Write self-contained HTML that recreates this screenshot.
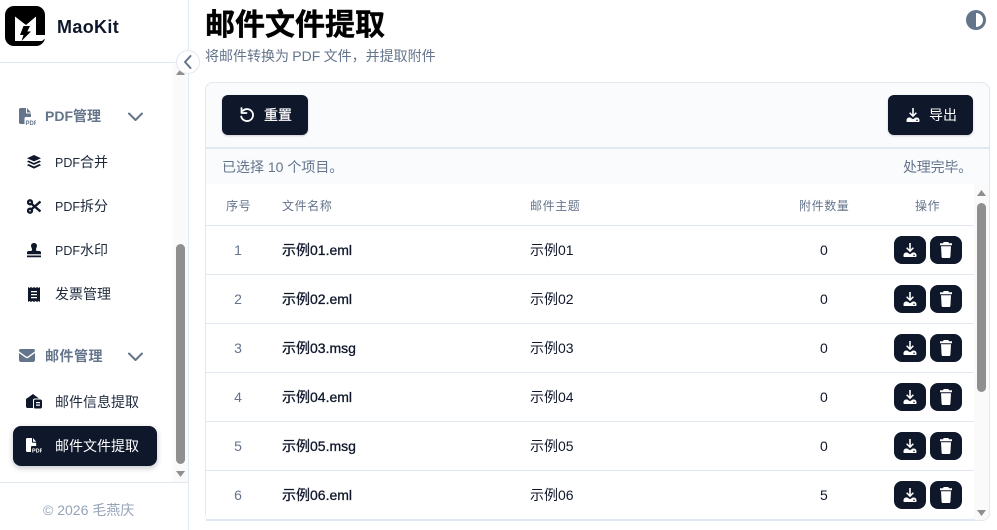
<!DOCTYPE html>
<html lang="zh"><head><meta charset="utf-8"><title>MaoKit</title>
<style>
*{box-sizing:border-box;margin:0;padding:0}
html,body{width:997px;height:530px;overflow:hidden;background:#fff}
body{position:relative;font-family:"Liberation Sans","Noto Sans CJK SC",sans-serif;color:#0f172a}
.a{position:absolute;white-space:nowrap}
svg{position:absolute;display:block}
.nav{font-size:14px;color:#1e293b;line-height:20px;left:55px}
.nav i{font-style:normal;font-size:12.500px}
.grp{font-size:14px;font-weight:700;color:#64748b;line-height:20px;left:45px}
.th{font-size:12px;letter-spacing:.6px;color:#64748b;line-height:16px;top:198px}
.c{font-size:14px;line-height:20px;color:#0f172a}
.f{font-size:14px;line-height:20px;color:#0f172a;left:282px;-webkit-text-stroke:.3px #0f172a}
.n{font-size:14px;line-height:20px;color:#64748b;width:40px;left:218px;text-align:center}
.hl{position:absolute;left:206px;width:768px;height:1px;background:#e2e8f0}
.b{position:absolute;width:32px;height:28px;border-radius:8px;background:#0f172a}
</style></head><body>
<svg width="0" height="0" style="position:absolute"><defs>
<g id="dl"><path fill="#fff" d="M7.200 1h1.600v6.200l2-2 1.100 1.100L8 10.200 4.100 6.300l1.100-1.100 2 2z"/><path fill="#fff" fill-rule="evenodd" d="M1.500 13.300c0-1.300.9-2.600 2.400-2.800h1.400L8 12.300l2.700-1.800h1.400c1.500.2 2.400 1.500 2.400 2.800v.9c0 .4-.3.800-.8.800H2.300c-.5 0-.8-.4-.8-.8zM12 12.500a.8.800 0 1 0 0 1.600.8.800 0 1 0 0-1.600z"/></g>
<g id="tr"><path fill="#fff" d="M5.700 0h4.600l.7 1.300H14V3.200H2V1.300H5zM3 4.200h10l-.6 10.500c0 .7-.6 1.300-1.200 1.300H4.800c-.6 0-1.200-.6-1.200-1.300z"/></g>
</defs></svg>

<!-- sidebar -->
<div class="a" style="left:188px;top:0;width:1px;height:530px;background:#e2e8f0"></div>
<div class="a" style="left:0;top:62px;width:188px;height:1px;background:#e2e8f0"></div>
<div class="a" style="left:0;top:482px;width:188px;height:1px;background:#e2e8f0"></div>
<div class="a" style="left:173px;top:63px;width:15px;height:419px;background:#fafafa"></div>
<div class="a" style="left:176px;top:244px;width:9px;height:220px;border-radius:5px;background:#8f8f8f"></div>
<svg style="left:176px;top:69px" width="9" height="6"><path d="M4.500 0L9 6H0z" fill="#8f8f8f"/></svg>
<svg style="left:176px;top:471px" width="9" height="6"><path d="M0 0H9L4.500 6z" fill="#8f8f8f"/></svg>

<svg style="left:5px;top:6px" width="40" height="40" viewBox="0 0 40 40">
<rect width="40" height="40" rx="9" fill="#000"/>
<path fill="#fff" d="M10 10.500L21 19 31 10.500V29H40V32.500L37 35H10z"/>
<path fill="#000" d="M18.500 20H25L22.300 25.500H26L16.500 35 18.500 29H15z"/>
</svg>
<div class="a" style="left:57px;top:15px;font-size:18px;font-weight:700;line-height:24px;color:#0f172a;letter-spacing:.35px">MaoKit</div>

<svg style="left:176px;top:50px" width="24" height="24"><circle cx="12" cy="12" r="11.500" fill="#fff" stroke="#e2e8f0"/><path d="M14.500 6L9 12l5.500 6" fill="none" stroke="#64748b" stroke-width="2" stroke-linecap="round" stroke-linejoin="round"/></svg>

<svg style="left:19px;top:108px" width="17" height="18" viewBox="0 0 17 18"><path fill="#64748b" d="M1.500 0H7v4.500c0 .6.400 1 1 1h4V9H7c-1 0-1.500.6-1.500 1.500V16H1.500C.7 16 0 15.300 0 14.500V1.500C0 .7.700 0 1.500 0zM8 0l4 4.500H8z"/><text x="6.500" y="17" font-size="6" font-weight="700" fill="#64748b" font-family="Liberation Sans">PDF</text></svg>
<div class="a grp" style="top:106px">PDF管理</div>
<svg style="left:128px;top:112px" width="15" height="10"><path d="M1 1.500L7.500 8 14 1.500" fill="none" stroke="#64748b" stroke-width="2" stroke-linecap="round" stroke-linejoin="round"/></svg>

<svg style="left:27px;top:155px" width="14" height="14" viewBox="0 0 14 14"><path fill="#0f172a" d="M7 0l7 3.200-7 3.200L0 3.200zM1.500 5.500L7 8l5.500-2.500L14 6.700 7 9.900 0 6.700zM1.500 9L7 11.500 12.500 9l1.500 1.200L7 13.600 0 10.200z"/></svg>
<div class="a nav" style="top:152px"><i>PDF</i>合并</div>
<svg style="left:27px;top:199px" width="14" height="15" viewBox="0 0 14 15"><g fill="none" stroke="#0f172a" stroke-width="2.300"><circle cx="3" cy="3.300" r="2"/><circle cx="3" cy="11.700" r="2"/><path d="M4.800 5L13.500 12.500M4.800 10L13.500 2.500"/></g></svg>
<div class="a nav" style="top:196px"><i>PDF</i>拆分</div>
<svg style="left:27px;top:243px" width="14" height="15" viewBox="0 0 14 15"><path fill="#0f172a" d="M7 0c1.700 0 3 1.200 3 2.800 0 1.500-1 2.200-1 3.700 0 .7.300 1.500 1 1.500h2.500c.8 0 1.500.7 1.500 1.500V11.300H0V9.500C0 8.700.700 8 1.500 8H4c.7 0 1-.8 1-1.500 0-1.500-1-2.200-1-3.700C4 1.200 5.300 0 7 0zM0 12.500h14V14.200H0z"/></svg>
<div class="a nav" style="top:240px"><i>PDF</i>水印</div>
<svg style="left:28px;top:287px" width="12" height="15" viewBox="0 0 12 15"><path fill="#0f172a" d="M0 0l1.500 1L3 0l1.500 1L6 0l1.500 1L9 0l1.500 1L12 0v15l-1.500-1L9 15l-1.500-1L6 15l-1.500-1L3 15l-1.500-1L0 15zM3 4v1.300h6V4zM3 7v1.300h6V7zM3 10v1.300h6V10z" fill-rule="evenodd"/></svg>
<div class="a nav" style="top:284px">发票管理</div>

<svg style="left:19px;top:349px" width="16" height="13" viewBox="0 0 16 13"><path fill="#64748b" d="M1.500 0h13C15.300 0 16 .7 16 1.500c0 .5-.2.900-.6 1.200L8.600 7.600c-.4.300-.8.300-1.200 0L.6 2.700C.2 2.400 0 2 0 1.500 0 .7.700 0 1.500 0zM0 4l6.800 4.900c.7.500 1.700.5 2.400 0L16 4v7c0 1.100-.9 2-2 2H2c-1.100 0-2-.9-2-2z"/></svg>
<div class="a grp" style="top:346px;letter-spacing:.5px">邮件管理</div>
<svg style="left:128px;top:352px" width="15" height="10"><path d="M1 1.500L7.500 8 14 1.500" fill="none" stroke="#64748b" stroke-width="2" stroke-linecap="round" stroke-linejoin="round"/></svg>

<svg style="left:26px;top:394px" width="16" height="15" viewBox="0 0 16 15"><path fill="#0f172a" d="M7 0l6 4.500H8.500C7.700 4.500 7 5.200 7 6v8H1.500C.7 14 0 13.300 0 12.500V5z"/><path fill="#0f172a" fill-rule="evenodd" d="M9 5.500h5.500c.8 0 1.500.7 1.500 1.500v6c0 .8-.7 1.500-1.500 1.500H9c-.8 0-1-.7-1-1.500V7c0-.8.200-1.500 1-1.500zM10 8v1.200h4V8zM10 10.500v1.200h4v-1.200z"/></svg>
<div class="a nav" style="top:392px">邮件信息提取</div>

<div class="a" style="left:13px;top:426px;width:144px;height:40px;border-radius:8px;background:#0f172a;box-shadow:0 2px 6px rgba(15,23,42,.25)"></div>
<svg style="left:26px;top:438px" width="16" height="16" viewBox="0 0 16 16"><path fill="#fff" d="M1.200 0H6v3.800c0 .5.300.9.900.9h3.300V8H6C5.200 8 5 8.500 5 9.200V14H1.200C.5 14 0 13.500 0 12.800V1.200C0 .5.500 0 1.200 0zM7 0l3.200 3.700H7z"/><text x="6" y="14.500" font-size="5.500" font-weight="700" fill="#fff" font-family="Liberation Sans">PDF</text></svg>
<div class="a nav" style="top:436px;color:#fff">邮件文件提取</div>

<div class="a" style="left:43px;top:500px;font-size:14px;line-height:20px;color:#94a3b8">© 2026 毛燕庆</div>

<!-- header -->
<div class="a" style="left:205px;top:8px;font-size:30px;font-weight:700;line-height:36px;color:#000;-webkit-text-stroke:.4px #000">邮件文件提取</div>
<div class="a" style="left:205px;top:46px;font-size:14px;line-height:20px;color:#64748b;word-spacing:-.6px">将邮件转换为 PDF 文件，并提取附件</div>
<svg style="left:966px;top:10px" width="20" height="20"><circle cx="10" cy="10" r="10" fill="#64748b"/><path d="M10 3a7 7 0 0 1 0 14z" fill="#fff"/></svg>

<!-- card -->
<div class="a" style="left:205px;top:82px;width:785px;height:439px;border:1px solid #e2e8f0;border-radius:8px;background:#fafbfd"></div>
<div class="a" style="left:206px;top:147px;width:783px;height:2px;background:#e2e8f0"></div>
<div class="a" style="left:206px;top:184px;width:768px;height:335px;background:#fff"></div>
<div class="a" style="left:974px;top:184px;width:15px;height:336px;border-radius:0 0 8px 0;background:#fafafa"></div>

<div class="a" style="left:222px;top:95px;width:86px;height:40px;border-radius:6px;background:#0f172a;box-shadow:0 1px 2px rgba(15,23,42,.2)"></div>
<svg style="left:239px;top:107px" width="16" height="16" viewBox="0 0 16 16"><path d="M3.800 3.800A6 6 0 1 1 2.200 9.500" fill="none" stroke="#fff" stroke-width="1.800" stroke-linecap="round"/><path d="M1.500 1.500V6.500H6.500" fill="none" stroke="#fff" stroke-width="1.800" stroke-linecap="round" stroke-linejoin="round" transform="translate(1 -.5)"/></svg>
<div class="a" style="left:264px;top:105px;font-size:14px;line-height:20px;color:#fff;-webkit-text-stroke:.2px #fff">重置</div>

<div class="a" style="left:888px;top:95px;width:85px;height:40px;border-radius:6px;background:#0f172a;box-shadow:0 1px 2px rgba(15,23,42,.2)"></div>
<svg style="left:905px;top:107px" width="16" height="16"><use href="#dl"/></svg>
<div class="a" style="left:929px;top:105px;font-size:14px;line-height:20px;color:#fff">导出</div>

<div class="a" style="left:222px;top:157px;font-size:14px;line-height:20px;color:#64748b">已选择 10 个项目。</div>
<div class="a" style="left:903px;top:157px;font-size:14px;line-height:20px;color:#64748b;letter-spacing:-.2px">处理完毕。</div>

<!-- table -->
<div class="a th" style="left:226px">序号</div>
<div class="a th" style="left:282px">文件名称</div>
<div class="a th" style="left:530px">邮件主题</div>
<div class="a th" style="left:799px">附件数量</div>
<div class="a th" style="left:915px">操作</div>
<div class="hl" style="top:225px"></div>
<div class="hl" style="top:274px"></div>
<div class="hl" style="top:323px"></div>
<div class="hl" style="top:372px"></div>
<div class="hl" style="top:421px"></div>
<div class="hl" style="top:470px"></div>
<div class="a" style="left:206px;top:519px;width:769px;height:2px;background:#e2e8f0"></div>

<div class="a n" style="top:240px">1</div>
<div class="a f" style="top:240px">示例01.eml</div>
<div class="a c" style="left:530px;top:240px">示例01</div>
<div class="a c" style="left:820px;top:240px">0</div>
<div class="b" style="left:894px;top:236px"><svg style="left:8px;top:6px" width="16" height="16"><use href="#dl"/></svg></div>
<div class="b" style="left:930px;top:236px"><svg style="left:8px;top:6px" width="16" height="16"><use href="#tr"/></svg></div>

<div class="a n" style="top:289px">2</div>
<div class="a f" style="top:289px">示例02.eml</div>
<div class="a c" style="left:530px;top:289px">示例02</div>
<div class="a c" style="left:820px;top:289px">0</div>
<div class="b" style="left:894px;top:285px"><svg style="left:8px;top:6px" width="16" height="16"><use href="#dl"/></svg></div>
<div class="b" style="left:930px;top:285px"><svg style="left:8px;top:6px" width="16" height="16"><use href="#tr"/></svg></div>

<div class="a n" style="top:338px">3</div>
<div class="a f" style="top:338px">示例03.msg</div>
<div class="a c" style="left:530px;top:338px">示例03</div>
<div class="a c" style="left:820px;top:338px">0</div>
<div class="b" style="left:894px;top:334px"><svg style="left:8px;top:6px" width="16" height="16"><use href="#dl"/></svg></div>
<div class="b" style="left:930px;top:334px"><svg style="left:8px;top:6px" width="16" height="16"><use href="#tr"/></svg></div>

<div class="a n" style="top:387px">4</div>
<div class="a f" style="top:387px">示例04.eml</div>
<div class="a c" style="left:530px;top:387px">示例04</div>
<div class="a c" style="left:820px;top:387px">0</div>
<div class="b" style="left:894px;top:383px"><svg style="left:8px;top:6px" width="16" height="16"><use href="#dl"/></svg></div>
<div class="b" style="left:930px;top:383px"><svg style="left:8px;top:6px" width="16" height="16"><use href="#tr"/></svg></div>

<div class="a n" style="top:436px">5</div>
<div class="a f" style="top:436px">示例05.msg</div>
<div class="a c" style="left:530px;top:436px">示例05</div>
<div class="a c" style="left:820px;top:436px">0</div>
<div class="b" style="left:894px;top:432px"><svg style="left:8px;top:6px" width="16" height="16"><use href="#dl"/></svg></div>
<div class="b" style="left:930px;top:432px"><svg style="left:8px;top:6px" width="16" height="16"><use href="#tr"/></svg></div>

<div class="a n" style="top:485px">6</div>
<div class="a f" style="top:485px">示例06.eml</div>
<div class="a c" style="left:530px;top:485px">示例06</div>
<div class="a c" style="left:820px;top:485px">5</div>
<div class="b" style="left:894px;top:481px"><svg style="left:8px;top:6px" width="16" height="16"><use href="#dl"/></svg></div>
<div class="b" style="left:930px;top:481px"><svg style="left:8px;top:6px" width="16" height="16"><use href="#tr"/></svg></div>

<div class="a" style="left:977px;top:203px;width:9px;height:189px;border-radius:5px;background:#8f8f8f"></div>
<svg style="left:977px;top:190px" width="9" height="6"><path d="M4.500 0L9 6H0z" fill="#8f8f8f"/></svg>
<svg style="left:977px;top:510px" width="9" height="6"><path d="M0 0H9L4.500 6z" fill="#8f8f8f"/></svg>
</body></html>
